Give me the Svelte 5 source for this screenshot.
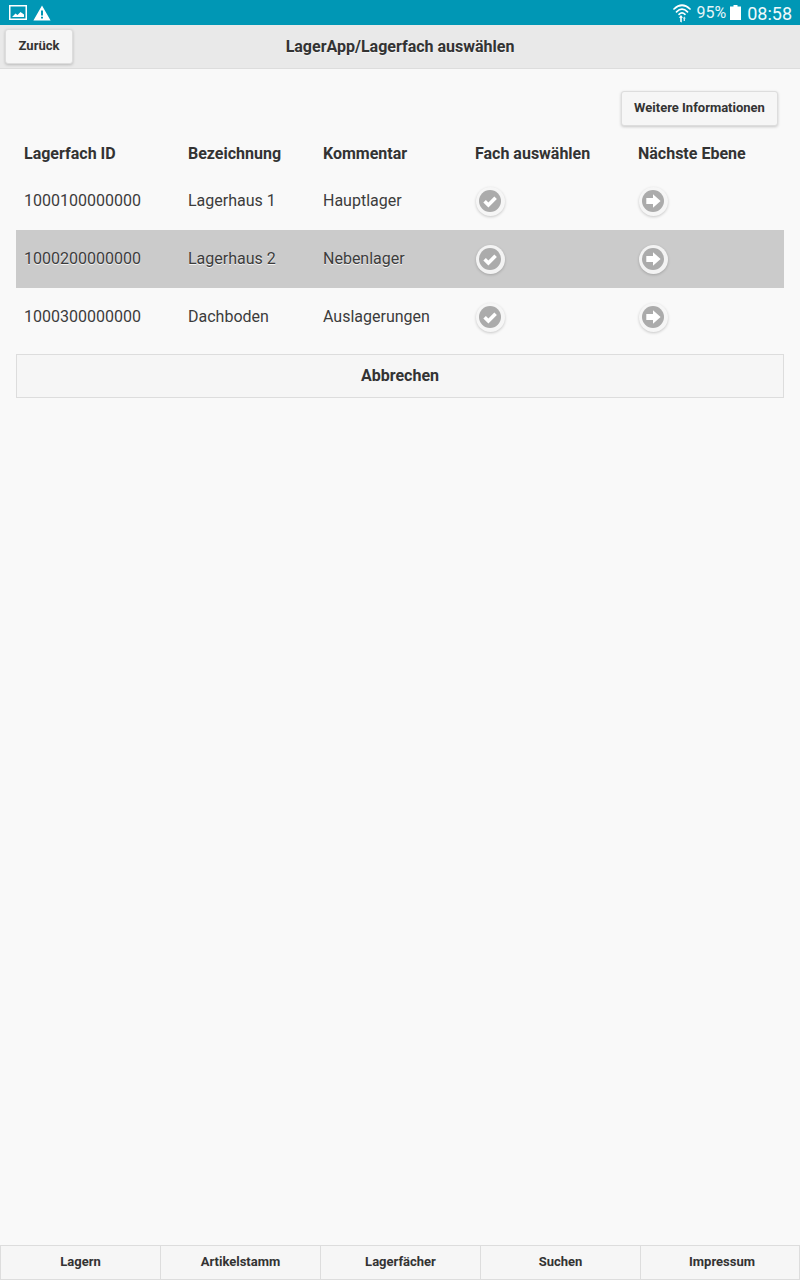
<script>
  const rows = [
    { id: '1000100000000', name: 'Lagerhaus 1', note: 'Hauptlager' },
    { id: '1000200000000', name: 'Lagerhaus 2', note: 'Nebenlager', active: true },
    { id: '1000300000000', name: 'Dachboden', note: 'Auslagerungen' }
  ];
  const tabs = ['Lagern', 'Artikelstamm', 'Lagerfächer', 'Suchen', 'Impressum'];
</script>

<div class="page">
  <div class="status">
    <svg class="ic-img" width="18" height="15" viewBox="0 0 18 15">
      <rect x="0.75" y="0.75" width="16.5" height="13.5" fill="none" stroke="#fff" stroke-width="1.5" />
      <path d="M3 12 L6.5 8.5 L8.5 10 L11.5 7 L15 9.5 V12 Z" fill="#fff" />
    </svg>
    <svg class="ic-warn" width="18" height="16" viewBox="0 0 18 16">
      <path fill-rule="evenodd" d="M9 0.5 L17.6 15.5 H0.4 Z M8 5.5 V10.5 H10 V5.5 Z M8 11.8 V13.6 H10 V11.8 Z" fill="#fff" />
    </svg>
    <span class="spacer"></span>
    <svg class="ic-wifi" width="18" height="20" viewBox="0 0 18 20">
      <g fill="none" stroke="#fff" stroke-width="1.7" stroke-linecap="round">
        <path d="M1 6 Q9 -1.5 17 6" />
        <path d="M3.5 8.8 Q9 3.6 14.5 8.8" />
        <path d="M6 11.3 Q9 8.6 12 11.3" />
      </g>
      <path d="M8 12 L5.8 14.8 H7.2 V18.8 L8.8 19.5 V14.8 H10 Z" fill="#fff" />
      <path d="M11.3 13.5 L9.8 15.5 H10.6 V18 H12 V15.5 H12.8 Z" fill="#cfeaf0" />
    </svg>
    <span class="pct">95%</span>
    <svg class="ic-batt" width="11" height="15" viewBox="0 0 11 15">
      <path d="M3.5 0 H7.5 V1.5 H11 V15 H0 V1.5 H3.5 Z" fill="#fff" />
    </svg>
    <span class="time">08:58</span>
  </div>

  <header class="head">
    <button class="btn back">Zurück</button>
    <h1>LagerApp/Lagerfach auswählen</h1>
  </header>

  <main class="content">
    <div class="info-row">
      <button class="btn info">Weitere Informationen</button>
    </div>

    <div class="table">
      <div class="tr th">
        <div>Lagerfach ID</div>
        <div>Bezeichnung</div>
        <div>Kommentar</div>
        <div>Fach auswählen</div>
        <div>Nächste Ebene</div>
      </div>
      {#each rows as r}
        <div class="tr td" class:active={r.active}>
          <div>{r.id}</div>
          <div>{r.name}</div>
          <div>{r.note}</div>
          <div>
            <span class="round">
              <svg width="22" height="22" viewBox="0 0 22 22">
                <circle cx="11" cy="11" r="11" fill="#ababab" />
                <path d="M5.6 11.2 L9.4 15 L16.6 7.8" fill="none" stroke="#fff" stroke-width="3.6" />
              </svg>
            </span>
          </div>
          <div>
            <span class="round">
              <svg width="22" height="22" viewBox="0 0 22 22">
                <circle cx="11" cy="11" r="11" fill="#ababab" />
                <path d="M4.3 8 H11 V4.2 L18.6 11 L11 17.8 V14 H4.3 Z" fill="#fff" />
              </svg>
            </span>
          </div>
        </div>
      {/each}
    </div>

    <button class="cancel">Abbrechen</button>
  </main>

  <footer class="foot">
    {#each tabs as t}
      <button class="tab">{t}</button>
    {/each}
  </footer>
</div>

<style>
  :global(body) {
    margin: 0;
    background: #f9f9f9;
  }
  .page {
    width: 800px;
    height: 1280px;
    display: flex;
    flex-direction: column;
    font-family: Roboto, "Liberation Sans", sans-serif;
    color: #333;
    background: #f9f9f9;
    overflow: hidden;
  }
  .status {
    height: 25px;
    flex: none;
    background: #0097b5;
    color: #fff;
    display: flex;
    align-items: center;
    padding: 0 8px 0 9px;
    box-sizing: border-box;
  }
  .ic-warn { margin-left: 6px; }
  .spacer { flex: 1; }
  .ic-wifi { margin-right: 5px; }
  .pct { font-size: 16px; margin-right: 4px; color: #e6f5f8; }
  .ic-batt { margin-right: 6px; }
  .time { font-size: 18px; color: #f0fafc; padding-top: 2px; }
  .head {
    height: 44px;
    flex: none;
    box-sizing: border-box;
    background: #e9e9e9;
    border-bottom: 1px solid #ddd;
    display: flex;
    align-items: center;
    justify-content: center;
    position: relative;
  }
  h1 {
    margin: 0;
    font-size: 16px;
    font-weight: 700;
    color: #333;
    text-shadow: 0 1px 0 #f3f3f3;
  }
  .btn {
    font-family: inherit;
    font-size: 13px;
    font-weight: 700;
    color: #333;
    background: #f6f6f6;
    border: 1px solid #ddd;
    border-radius: 3px;
    box-shadow: 0 1px 3px rgba(0, 0, 0, 0.2);
    text-shadow: 0 1px 0 #f3f3f3;
    padding: 0 0 2px;
    box-sizing: border-box;
  }
  .back {
    position: absolute;
    left: 5px;
    top: 4px;
    width: 68px;
    height: 35px;
  }
  .content {
    flex: 1;
    padding: 22px 16px 0;
    box-sizing: border-box;
  }
  .info-row {
    display: flex;
    justify-content: flex-end;
    padding-right: 6px;
  }
  .info {
    width: 157px;
    height: 35px;
  }
  .table {
    margin-top: 7px;
  }
  .tr {
    display: grid;
    grid-template-columns: 164px 135px 152px 163px 1fr;
    padding-left: 8px;
    align-items: center;
  }
  .th {
    height: 39px;
    font-size: 16px;
    font-weight: 700;
    padding-top: 1px;
    box-sizing: border-box;
  }
  .td {
    height: 58px;
    font-size: 16px;
    color: #3c3c3c;
    padding-bottom: 2px;
    box-sizing: border-box;
  }
  .td.active {
    background: #cbcbcb;
    text-shadow: 0 1px 0 #f3f3f3;
  }
  .round {
    display: flex;
    align-items: center;
    justify-content: center;
    width: 29px;
    height: 29px;
    margin-left: 0.5px;
    box-sizing: border-box;
    border-radius: 50%;
    background: #f6f6f6;
    box-shadow: 0 1px 3px rgba(0, 0, 0, 0.2);
    margin-top: 2px;
  }
  .active .round { background: #f3f3f3; }
  .round svg { display: block; }
  .cancel {
    display: block;
    width: 100%;
    height: 44px;
    margin-top: 8px;
    font-family: inherit;
    font-size: 16px;
    font-weight: 700;
    color: #333;
    background: #f6f6f6;
    border: 1px solid #ddd;
    text-shadow: 0 1px 0 #f3f3f3;
    padding: 0 0 2px;
  }
  .foot {
    height: 35px;
    flex: none;
    display: grid;
    grid-template-columns: repeat(5, 1fr);
  }
  .tab {
    font-family: inherit;
    font-size: 13px;
    font-weight: 700;
    color: #333;
    background: #f6f6f6;
    border: 1px solid #ddd;
    border-left-width: 1px;
    border-right: 0;
    text-shadow: 0 1px 0 #f3f3f3;
    padding: 0 0 2px;
  }
  .tab:last-child {
    border-right: 1px solid #ddd;
    padding-left: 4px;
  }
</style>
